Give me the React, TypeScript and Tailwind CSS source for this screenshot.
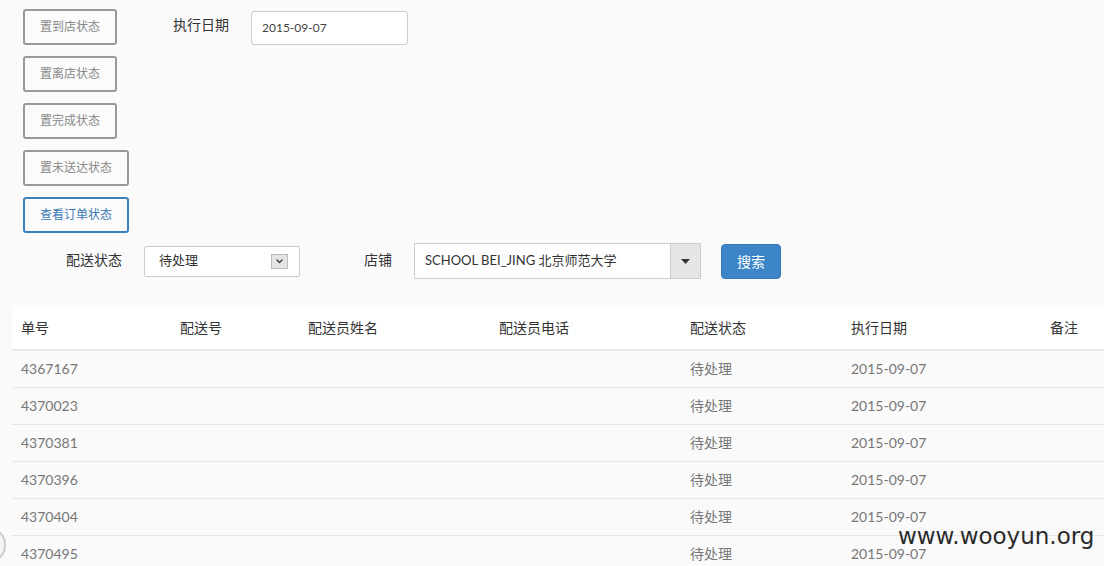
import React from "react";

const font = { fontFamily: '"Lato", "Noto Sans CJK SC", sans-serif' };

const rows = ["4367167", "4370023", "4370381", "4370396", "4370404", "4370495"];

function ActionButton({ label, wide, active }: { label: string; wide?: boolean; active?: boolean }) {
  return (
    <button
      className={`h-[36px] ${wide ? "w-[106px]" : "w-[94px]"} rounded-[3px] border-2 text-[12px] bg-[#fbfbfb] ${
        active ? "border-[#3d80b9] text-[#3a78b5]" : "border-[#999] text-[#888]"
      }`}
    >
      {label}
    </button>
  );
}

export default function App() {
  return (
    <div className="relative w-[1104px] h-[566px] overflow-hidden bg-[#fafafa] text-[#333]" style={font}>
      <div className="flex pt-[9px] pl-[23px]">
        <div className="flex flex-col gap-[11px]">
          <ActionButton label="置到店状态" />
          <ActionButton label="置离店状态" />
          <ActionButton label="置完成状态" />
          <ActionButton label="置未送达状态" wide />
          <ActionButton label="查看订单状态" wide active />
        </div>
        <div className="flex items-start ml-[44px] pt-[2px]">
          <span className="text-[14px] text-[#333] mt-[3px] w-[78px]">执行日期</span>
          <div className="w-[157px] h-[34px] border border-[#ccc] rounded-[3px] bg-white flex items-center px-[10px] text-[12px] text-[#444]">
            2015-09-07
          </div>
        </div>
      </div>

      <div className="flex items-center h-[36px] mt-[10px]">
        <span className="ml-[66px] w-[78px] text-[14px] text-[#333] mt-[-4px]">配送状态</span>
        <div className="w-[156px] h-[31px] border border-[#ccc] rounded-[2px] bg-white flex items-center justify-between pl-[14px] pr-[11px] text-[13px] text-[#333]">
          <span>待处理</span>
          <span className="w-[17px] h-[15px] border border-[#bbb] bg-[#e4e4e4] flex items-center justify-center">
            <svg width="9" height="6" viewBox="0 0 9 6">
              <path d="M1.5 1.5 L4.5 4.5 L7.5 1.5" fill="none" stroke="#444" strokeWidth="1.4" />
            </svg>
          </span>
        </div>
        <span className="ml-[64px] w-[50px] text-[14px] text-[#333] mt-[-4px]">店铺</span>
        <div className="w-[287px] h-[36px] border border-[#ccc] bg-white flex items-stretch">
          <span className="flex-1 flex items-center pl-[10px] text-[13px] text-[#333]">SCHOOL BEI_JING 北京师范大学</span>
          <span className="w-[30px] bg-[#e6e6e6] border-l border-[#ccc] flex items-center justify-center">
            <svg width="9" height="5" viewBox="0 0 9 5">
              <path d="M0 0 L9 0 L4.5 5 Z" fill="#333" />
            </svg>
          </span>
        </div>
        <button className="ml-[20px] w-[60px] h-[35px] rounded-[4px] bg-[#3c86c8] border border-[#3579b8] text-white text-[14px]">
          搜索
        </button>
      </div>

      <table className="ml-[12px] mt-[26px] w-[1092px] table-fixed border-collapse text-[14px]">
        <colgroup>
          <col className="w-[159px]" />
          <col className="w-[128px]" />
          <col className="w-[191px]" />
          <col className="w-[191px]" />
          <col className="w-[161px]" />
          <col className="w-[199px]" />
          <col className="w-[63px]" />
        </colgroup>
        <thead>
          <tr className="bg-white h-[45px] border-b-2 border-[#e8e8e8] text-[#333]">
            <th className="text-left font-normal pl-[9px]">单号</th>
            <th className="text-left font-normal pl-[9px]">配送号</th>
            <th className="text-left font-normal pl-[9px]">配送员姓名</th>
            <th className="text-left font-normal pl-[9px]">配送员电话</th>
            <th className="text-left font-normal pl-[9px]">配送状态</th>
            <th className="text-left font-normal pl-[9px]">执行日期</th>
            <th className="text-left font-normal pl-[9px]">备注</th>
          </tr>
        </thead>
        <tbody>
          {rows.map((r, i) => (
            <tr key={r} className={`h-[37px] text-[#777] ${i > 0 ? "border-t border-[#e6e6e6]" : ""}`}>
              <td className="pl-[9px]">{r}</td>
              <td></td>
              <td></td>
              <td></td>
              <td className="pl-[9px]">待处理</td>
              <td className="pl-[9px]">2015-09-07</td>
              <td></td>
            </tr>
          ))}
        </tbody>
      </table>

      <div className="absolute left-[-26px] top-[528px] w-[32px] h-[34px] rounded-full border-2 border-[#ccc] bg-[#f3f3f3]" />
      <div
        className="absolute left-[898px] top-[519px] text-[23px] text-[#2a2a2a]"
        style={{ fontFamily: '"DejaVu Sans", sans-serif' }}
      >
        www.wooyun.org
      </div>
    </div>
  );
}
